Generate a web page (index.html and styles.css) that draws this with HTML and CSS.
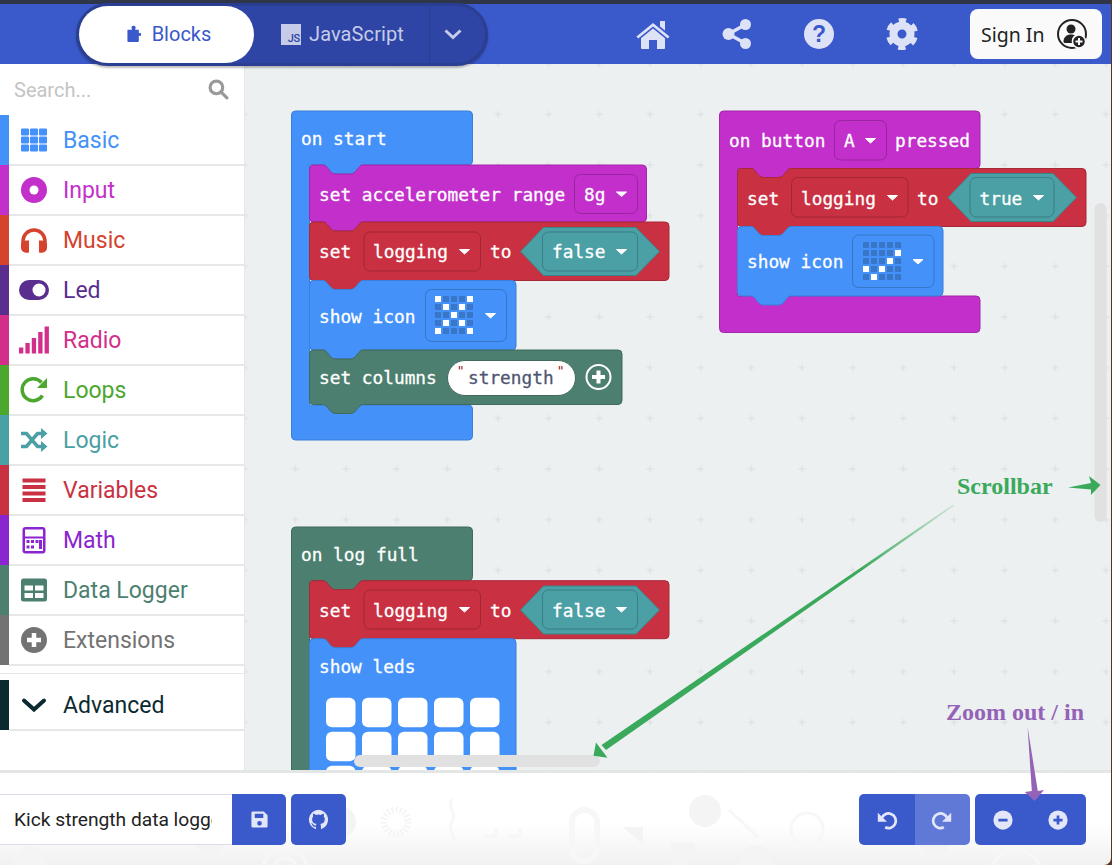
FILE: index.html
```html
<!DOCTYPE html>
<html lang="en">
<head>
<meta charset="utf-8">
<title>Kick strength data logger</title>
<link rel="stylesheet" href="styles.css">
</head>
<body>
<div class="app">
  <div class="topline"></div>
  <header class="header">
    <div class="toggle">
      <button class="tab tab-active">
        <svg class="tab-icon" viewBox="0 0 16 20"><path d="M1 5h4.200c.6 0 .7-.5.3-1C4.600 3 5 .5 7.500.5S10.400 3 9.500 4c-.4.5-.3 1 .3 1H13.500v3.600c0 .6.5.7 1 .3 1-.8 1.500.2 1.500 1.600s-.5 2.400-1.500 1.600c-.5-.4-1-.3-1 .3V18a1 1 0 0 1-1 1H1.500a1 1 0 0 1-1-1V5.500z"/></svg>
        <span>Blocks</span>
      </button>
      <button class="tab tab-js">
        <span class="js-icon">JS</span>
        <span>JavaScript</span>
      </button>
      <button class="tab-more">
        <svg class="more-icon" viewBox="0 0 20 12"><path d="M2.500 2.500 10 9.500l7.500-7"/></svg>
      </button>
    </div>
    <nav class="nav">
      <span class="nav-item"><svg viewBox="0 0 36 32"><path d="M18 5 34.500 18.500l-1.700 2L18 8.500 3.200 20.500l-1.700-2L18 5zM25 3h5v9.500l-5-4V3z"/><path d="M18 10.500 30 20.200V30a1 1 0 0 1-1 1h-7V22h-8v9H7a1 1 0 0 1-1-1v-9.800L18 10.500z"/></svg></span>
      <span class="nav-item"><svg viewBox="-3.500 0 36 32"><circle cx="7" cy="16" r="6"/><circle cx="24" cy="6.500" r="5.500"/><circle cx="24" cy="25.500" r="5.500"/><path class="nav-line" d="M7 16 24 6.500M7 16l17 9.500"/></svg></span>
      <span class="nav-item"><svg viewBox="-2 0 36 32"><circle cx="16" cy="16" r="15"/><text class="help-q" x="16" y="24" text-anchor="middle">?</text></svg></span>
      <span class="nav-item"><svg viewBox="-2 0 36 32"><circle class="gear-teeth" cx="16" cy="16" r="13"/><circle class="gear-ring" cx="16" cy="16" r="8.500"/></svg></span>
    </nav>
    <button class="signin">
      <span>Sign In</span>
      <svg class="signin-icon" viewBox="0 0 32 32"><circle class="si-ring" cx="16" cy="16" r="14"/><circle cx="15" cy="11" r="4.500"/><path d="M7.500 24c0-5 3-7.500 7.500-7.500 2 0 3 .5 4 1-2.500 1-3.500 4-3 7.500h-7a1.500 1.500 0 0 1-1.500-1z"/><circle class="si-badge" cx="23" cy="23.500" r="6.500"/><path class="si-plus" d="M23 20v7M19.500 23.500h7"/></svg>
    </button>
  </header>

  <main class="main">
    <aside class="sidebar">
      <div class="search">
        <span class="search-text">Search...</span>
        <svg class="search-icon" viewBox="0 0 20 20"><circle cx="8" cy="8" r="6"/><path d="m12.500 12.500 5.500 5.500"/></svg>
      </div>
      <ul class="cats">
        <li class="cat c-basic"><svg viewBox="0 0 32 32"><rect x="3" y="4.500" width="8" height="7" rx="1"/><rect x="12" y="4.500" width="8" height="7" rx="1"/><rect x="21" y="4.500" width="8" height="7" rx="1"/><rect x="3" y="12.500" width="8" height="7" rx="1"/><rect x="12" y="12.500" width="8" height="7" rx="1"/><rect x="21" y="12.500" width="8" height="7" rx="1"/><rect x="3" y="20.500" width="8" height="7" rx="1"/><rect x="12" y="20.500" width="8" height="7" rx="1"/><rect x="21" y="20.500" width="8" height="7" rx="1"/></svg><span>Basic</span></li>
        <li class="cat c-input"><svg viewBox="0 0 32 32"><circle cx="16" cy="16" r="13"/><circle class="ico-w" cx="16" cy="16" r="4.500"/></svg><span>Input</span></li>
        <li class="cat c-music"><svg viewBox="0 0 32 32"><path class="ico-s" d="M5 21v-4a11 11 0 0 1 22 0v4"/><path d="M3 19.500a6 6 0 0 1 6-3h2v11.500a.8.8 0 0 1-.8.8H8a5 5 0 0 1-5-5v-4.300zM29 19.500a6 6 0 0 0-6-3h-2v11.500a.8.8 0 0 0 .8.8H24a5 5 0 0 0 5-5v-4.300z"/></svg><span>Music</span></li>
        <li class="cat c-led"><svg viewBox="0 0 32 32"><rect x="1" y="6" width="30" height="20" rx="10"/><circle class="ico-w" cx="21" cy="16" r="6.500"/></svg><span>Led</span></li>
        <li class="cat c-radio"><svg viewBox="0 0 32 32"><rect x="1" y="23.500" width="4.300" height="6"/><rect x="7.400" y="19" width="4.300" height="10.500"/><rect x="13.800" y="14" width="4.300" height="15.500"/><rect x="20.200" y="8" width="4.300" height="21.500"/><rect x="26.600" y="2.500" width="4.300" height="27"/></svg><span>Radio</span></li>
        <li class="cat c-loops"><svg viewBox="0 0 32 32"><path class="ico-s" d="M24.500 21.500A11 11 0 1 1 23.500 8.500"/><path d="M29 4v10H19z"/></svg><span>Loops</span></li>
        <li class="cat c-logic"><svg viewBox="0 0 32 32"><path class="ico-s" d="M3 9.500h5.500l11 13H24M3 22.500h5.500l11-13H24"/><path d="M23 4l6.500 5.500L23 15zM23 17l6.500 5.500L23 28z"/></svg><span>Logic</span></li>
        <li class="cat c-vars"><svg viewBox="0 0 32 32"><rect x="4.500" y="4.500" width="23" height="4"/><rect x="4.500" y="11" width="23" height="4"/><rect x="4.500" y="17.500" width="23" height="4"/><rect x="4.500" y="24" width="23" height="4"/></svg><span>Variables</span></li>
        <li class="cat c-math"><svg viewBox="0 0 32 32"><rect x="4.500" y="3" width="23" height="26.500" rx="3"/><rect class="ico-w" x="7" y="5.500" width="18" height="7"/><rect class="ico-w" x="7" y="14.500" width="18" height="12.500"/><rect x="8.500" y="16" width="3" height="3"/><rect x="13" y="16" width="3" height="3"/><rect x="17.500" y="16" width="3" height="3"/><rect x="8.500" y="21.500" width="3" height="3"/><rect x="13" y="21.500" width="3" height="3"/><rect x="21" y="16" width="3" height="9"/></svg><span>Math</span></li>
        <li class="cat c-data"><svg viewBox="0 0 32 32"><rect x="3" y="4.500" width="26" height="23" rx="2.500"/><rect class="ico-w" x="6.500" y="11.500" width="8.500" height="5"/><rect class="ico-w" x="17" y="11.500" width="8.500" height="5"/><rect class="ico-w" x="6.500" y="19" width="8.500" height="5"/><rect class="ico-w" x="17" y="19" width="8.500" height="5"/></svg><span>Data Logger</span></li>
        <li class="cat c-ext"><svg viewBox="0 0 32 32"><circle cx="16" cy="16" r="13"/><path class="ico-plus" d="M16 9v14M9 16h14"/></svg><span>Extensions</span></li>
      </ul>
      <div class="cat-gap"></div>
      <div class="cat c-adv"><svg viewBox="0 0 32 32"><path class="ico-chev" d="M6 11.500 16 20.500l10-9"/></svg><span>Advanced</span></div>
    </aside>

    <div class="workspace">
      <svg class="canvas" viewBox="245 64 867 706" preserveAspectRatio="xMinYMin meet">
        <defs>
          <pattern id="grid" patternUnits="userSpaceOnUse" x="244.600" y="63.600" width="50.670" height="50.670">
            <path class="grid-cross" d="M0 0h3.500M50.670 0h-3.500M0 0v3.500M50.670 0v3.500M0 50.670v-3.500M50.670 50.670v-3.500M0 50.670h3.500M50.670 50.670h-3.500"/>
          </pattern>
          <polygon id="caret" class="caret" points="0.500,0.500 10.500,0.500 5.500,5"/>
          <g id="ledgrid">
            <rect x="0" y="0" width="6" height="6"/><rect x="8" y="0" width="6" height="6"/><rect x="16" y="0" width="6" height="6"/><rect x="24" y="0" width="6" height="6"/><rect x="32" y="0" width="6" height="6"/>
            <rect x="0" y="8" width="6" height="6"/><rect x="8" y="8" width="6" height="6"/><rect x="16" y="8" width="6" height="6"/><rect x="24" y="8" width="6" height="6"/><rect x="32" y="8" width="6" height="6"/>
            <rect x="0" y="16" width="6" height="6"/><rect x="8" y="16" width="6" height="6"/><rect x="16" y="16" width="6" height="6"/><rect x="24" y="16" width="6" height="6"/><rect x="32" y="16" width="6" height="6"/>
            <rect x="0" y="24" width="6" height="6"/><rect x="8" y="24" width="6" height="6"/><rect x="16" y="24" width="6" height="6"/><rect x="24" y="24" width="6" height="6"/><rect x="32" y="24" width="6" height="6"/>
            <rect x="0" y="32" width="6" height="6"/><rect x="8" y="32" width="6" height="6"/><rect x="16" y="32" width="6" height="6"/><rect x="24" y="32" width="6" height="6"/><rect x="32" y="32" width="6" height="6"/>
          </g>
        </defs>
        <rect class="grid-fill" x="245" y="64" width="867" height="706"/>

        <!-- on start -->
        <path class="b-blue" d="M291.500 115a4 4 0 0 1 4-4H468.500a4 4 0 0 1 4 4V161a4 4 0 0 1-4 4H362.500c-4 0-6 9-12 9h-15c-6 0-8-9-12-9H309.500V405H468.500a4 4 0 0 1 4 4V436a4 4 0 0 1-4 4H295.500a4 4 0 0 1-4-4z"/>
        <text class="bt" x="301" y="145">on start</text>

        <path class="b-mag" d="M309.500 169a4 4 0 0 1 4-4H323.500c4 0 6 9 12 9h15c6 0 8-9 12-9H642.500a4 4 0 0 1 4 4V218a4 4 0 0 1-4 4H362.500c-4 0-6 9-12 9h-15c-6 0-8-9-12-9H313.500a4 4 0 0 1-4-4z"/>
        <text class="bt" x="319" y="200.500">set accelerometer range</text>
        <rect class="f-mag" x="574.500" y="174.500" width="63" height="39" rx="6"/>
        <text class="bt" x="584" y="200.500">8g</text>
        <use href="#caret" x="616" y="191.500"/>

        <path class="b-red" d="M309.500 226a4 4 0 0 1 4-4H323.500c4 0 6 9 12 9h15c6 0 8-9 12-9H665a4 4 0 0 1 4 4V276.500a4 4 0 0 1-4 4H362.500c-4 0-6 9-12 9h-15c-6 0-8-9-12-9H313.500a4 4 0 0 1-4-4z"/>
        <text class="bt" x="319" y="258">set</text>
        <rect class="f-red" x="364" y="232" width="116.500" height="39" rx="6"/>
        <text class="bt" x="373" y="258">logging</text>
        <use href="#caret" x="459" y="249"/>
        <text class="bt" x="490" y="258">to</text>
        <polygon class="b-teal" points="520.500,251.500 543.500,227.500 636,227.500 659.500,251.500 636,275.500 543.500,275.500"/>
        <rect class="f-teal" x="542.500" y="232" width="95" height="39" rx="6"/>
        <text class="bt" x="552" y="258">false</text>
        <use href="#caret" x="616" y="249"/>

        <path class="b-blue" d="M309.500 284.500a4 4 0 0 1 4-4H323.500c4 0 6 9 12 9h15c6 0 8-9 12-9H512a4 4 0 0 1 4 4V346a4 4 0 0 1-4 4H362.500c-4 0-6 9-12 9h-15c-6 0-8-9-12-9H313.500a4 4 0 0 1-4-4z"/>
        <text class="bt" x="319" y="322.500">show icon</text>
        <rect class="f-blue" x="425.500" y="289.500" width="81" height="52" rx="6"/>
        <use class="led-off" href="#ledgrid" x="435" y="296"/>
        <g class="led-on">
          <rect x="435" y="296" width="6" height="6"/><rect x="467" y="296" width="6" height="6"/>
          <rect x="443" y="304" width="6" height="6"/><rect x="459" y="304" width="6" height="6"/>
          <rect x="451" y="312" width="6" height="6"/>
          <rect x="443" y="320" width="6" height="6"/><rect x="459" y="320" width="6" height="6"/>
          <rect x="435" y="328" width="6" height="6"/><rect x="467" y="328" width="6" height="6"/>
        </g>
        <use href="#caret" x="485" y="313"/>

        <path class="b-green" d="M309.500 354a4 4 0 0 1 4-4H323.500c4 0 6 9 12 9h15c6 0 8-9 12-9H618a4 4 0 0 1 4 4V400.500a4 4 0 0 1-4 4H362.500c-4 0-6 9-12 9h-15c-6 0-8-9-12-9H313.500a4 4 0 0 1-4-4z"/>
        <text class="bt" x="319" y="384">set columns</text>
        <rect class="str-field" x="447.500" y="360.500" width="128" height="35" rx="17.500"/>
        <text class="quote" x="456.800" y="374.500">"</text>
        <text class="quote" x="556.800" y="374.500">"</text>
        <text class="bt-str" x="468" y="384">strength</text>
        <circle class="add-ring" cx="598.500" cy="377" r="12"/>
        <path class="add-plus" d="M598.500 370.500v13M592 377h13"/>

        <!-- on button A pressed -->
        <path class="b-mag" d="M719.500 115a4 4 0 0 1 4-4H976a4 4 0 0 1 4 4V164.500a4 4 0 0 1-4 4H790.500c-4 0-6 9-12 9h-15c-6 0-8-9-12-9H737.500V296H976a4 4 0 0 1 4 4V328.500a4 4 0 0 1-4 4H723.500a4 4 0 0 1-4-4z"/>
        <text class="bt" x="729" y="147">on button</text>
        <rect class="f-mag" x="834.500" y="120.500" width="52" height="39.500" rx="6"/>
        <text class="bt" x="844" y="147">A</text>
        <use href="#caret" x="865" y="138"/>
        <text class="bt" x="895" y="147">pressed</text>

        <path class="b-red" d="M737.500 172.500a4 4 0 0 1 4-4H751.500c4 0 6 9 12 9h15c6 0 8-9 12-9H1082a4 4 0 0 1 4 4V222.500a4 4 0 0 1-4 4H790.500c-4 0-6 9-12 9h-15c-6 0-8-9-12-9H741.500a4 4 0 0 1-4-4z"/>
        <text class="bt" x="747" y="204.500">set</text>
        <rect class="f-red" x="791.500" y="177.500" width="116.500" height="39.500" rx="6"/>
        <text class="bt" x="801" y="204.500">logging</text>
        <use href="#caret" x="887" y="195"/>
        <text class="bt" x="917" y="204.500">to</text>
        <polygon class="b-teal" points="948,197.500 971,173.500 1053,173.500 1076.500,197.500 1053,221.500 971,221.500"/>
        <rect class="f-teal" x="970" y="177.500" width="84" height="39.500" rx="6"/>
        <text class="bt" x="979.500" y="204.500">true</text>
        <use href="#caret" x="1033" y="195"/>

        <path class="b-blue" d="M737.500 230.500a4 4 0 0 1 4-4H751.500c4 0 6 9 12 9h15c6 0 8-9 12-9H939a4 4 0 0 1 4 4V292a4 4 0 0 1-4 4H790.500c-4 0-6 9-12 9h-15c-6 0-8-9-12-9H741.500a4 4 0 0 1-4-4z"/>
        <text class="bt" x="747" y="268">show icon</text>
        <rect class="f-blue" x="852.500" y="235" width="81.500" height="52.500" rx="6"/>
        <use class="led-off" href="#ledgrid" x="863" y="242"/>
        <g class="led-on">
          <rect x="895" y="250" width="6" height="6"/>
          <rect x="887" y="258" width="6" height="6"/>
          <rect x="863" y="266" width="6" height="6"/><rect x="879" y="266" width="6" height="6"/>
          <rect x="871" y="274" width="6" height="6"/>
        </g>
        <use href="#caret" x="912.500" y="259"/>

        <!-- on log full -->
        <path class="b-green" d="M291.500 531a4 4 0 0 1 4-4H468.500a4 4 0 0 1 4 4V576.700a4 4 0 0 1-4 4H362.500c-4 0-6 9-12 9h-15c-6 0-8-9-12-9H309.500V780H291.500z"/>
        <text class="bt" x="301" y="560.500">on log full</text>

        <path class="b-red" d="M309.500 584.700a4 4 0 0 1 4-4H323.500c4 0 6 9 12 9h15c6 0 8-9 12-9H665a4 4 0 0 1 4 4V634.700a4 4 0 0 1-4 4H362.500c-4 0-6 9-12 9h-15c-6 0-8-9-12-9H313.500a4 4 0 0 1-4-4z"/>
        <text class="bt" x="319" y="616.500">set</text>
        <rect class="f-red" x="364" y="590" width="116.500" height="39" rx="6"/>
        <text class="bt" x="373" y="616.500">logging</text>
        <use href="#caret" x="459" y="607"/>
        <text class="bt" x="490" y="616.500">to</text>
        <polygon class="b-teal" points="520.500,610 543.500,586 636,586 659.500,610 636,634 543.500,634"/>
        <rect class="f-teal" x="542.500" y="590" width="95" height="39" rx="6"/>
        <text class="bt" x="552" y="616.500">false</text>
        <use href="#caret" x="616" y="607"/>

        <path class="b-blue" d="M309.500 642.700a4 4 0 0 1 4-4H323.500c4 0 6 9 12 9h15c6 0 8-9 12-9H512a4 4 0 0 1 4 4V780H309.500z"/>
        <text class="bt" x="319" y="672.500">show leds</text>
        <g class="led-big">
          <rect x="326" y="697.700" width="29.500" height="29.500" rx="6"/><rect x="362" y="697.700" width="29.500" height="29.500" rx="6"/><rect x="398" y="697.700" width="29.500" height="29.500" rx="6"/><rect x="434" y="697.700" width="29.500" height="29.500" rx="6"/><rect x="470" y="697.700" width="29.500" height="29.500" rx="6"/>
          <rect x="326" y="731.700" width="29.500" height="29.500" rx="6"/><rect x="362" y="731.700" width="29.500" height="29.500" rx="6"/><rect x="398" y="731.700" width="29.500" height="29.500" rx="6"/><rect x="434" y="731.700" width="29.500" height="29.500" rx="6"/><rect x="470" y="731.700" width="29.500" height="29.500" rx="6"/>
          <rect x="326" y="765.700" width="29.500" height="29.500" rx="6"/><rect x="362" y="765.700" width="29.500" height="29.500" rx="6"/><rect x="398" y="765.700" width="29.500" height="29.500" rx="6"/><rect x="434" y="765.700" width="29.500" height="29.500" rx="6"/><rect x="470" y="765.700" width="29.500" height="29.500" rx="6"/>
        </g>

        <rect class="scroll" x="354" y="755" width="246" height="12" rx="6"/>
        <rect class="scroll" x="1094.500" y="203" width="12" height="319" rx="6"/>
      </svg>
    </div>
  </main>

  <footer class="footer">
    <svg class="footer-art" viewBox="0 0 1112 92">
      <g class="art-fill">
        <circle cx="30" cy="89" r="16"/><circle cx="210" cy="67" r="15"/><circle cx="340" cy="49" r="16"/>
        <circle cx="705" cy="38" r="16"/><circle cx="756" cy="89" r="17"/><circle cx="935" cy="67" r="16"/>
        <polygon points="623,54 643,54 643,72"/>
        <path d="M671 70h24v12h-8v10h-16z"/>
      </g>
      <g class="art-line">
        <circle cx="807" cy="56" r="16"/>
        <path d="M729 37 759 65"/>
        <rect class="art-thick" x="572" y="37" width="25" height="51" rx="12.500"/>
        <path d="M452 26c-6 10 6 14 0 23s6 14 0 23"/>
        <path d="M484 63h12v-8M508 63h12v-8"/>
        <circle cx="285" cy="97" r="22"/><circle cx="285" cy="97" r="12"/>
        <circle cx="1016" cy="103" r="26"/>
      </g>
      <circle class="art-spin" cx="396" cy="49" r="12"/>
    </svg>
    <div class="file">
      <input class="file-name" value="Kick strength data logger" aria-label="Project name">
      <button class="btn btn-save"><svg viewBox="0 0 20 20"><path fill-rule="evenodd" d="M3 1.500h11.500L18.500 5.500V17a1.500 1.500 0 0 1-1.500 1.500H3A1.500 1.500 0 0 1 1.500 17V3A1.500 1.500 0 0 1 3 1.500zM5 4v4.500h9V4zm5 7.500a2.500 2.500 0 1 0 0 5 2.500 2.500 0 0 0 0-5z"/></svg></button>
      <button class="btn btn-gh"><svg viewBox="0 0 20 20"><path d="M10 .8A9.400 9.400 0 0 0 7 19c.5.1.6-.2.6-.5v-1.700c-2.600.6-3.200-1.200-3.200-1.200-.4-1.100-1-1.400-1-1.400-.9-.6 0-.6 0-.6 1 .1 1.500 1 1.500 1 .8 1.500 2.200 1 2.700.8.100-.6.300-1 .6-1.200-2.100-.2-4.300-1-4.300-4.600 0-1 .4-1.900 1-2.500-.1-.3-.4-1.200.1-2.500 0 0 .8-.3 2.600 1a9 9 0 0 1 4.700 0c1.800-1.300 2.600-1 2.600-1 .5 1.300.2 2.200.1 2.500.6.600 1 1.500 1 2.500 0 3.600-2.200 4.400-4.300 4.600.3.300.6.800.6 1.700v2.600c0 .3.200.6.700.5A9.400 9.400 0 0 0 10 .8z"/></svg></button>
    </div>
    <div class="controls">
      <div class="group">
        <button class="btn btn-seg"><svg viewBox="0 0 24 24"><path class="stroke-i" d="M6 10.500a8 8 0 1 1 4 9.500"/><path d="M2 4v10h10z"/></svg></button>
        <button class="btn btn-seg btn-dim"><svg viewBox="0 0 24 24"><path class="stroke-i" d="M18 10.500a8 8 0 1 0-4 9.500"/><path d="M22 4v10H12z"/></svg></button>
      </div>
      <div class="group">
        <button class="btn btn-seg"><svg viewBox="0 0 24 24"><circle cx="12" cy="12" r="10.500"/><path class="stroke-b" d="M7 12h10"/></svg></button>
        <button class="btn btn-seg"><svg viewBox="0 0 24 24"><circle cx="12" cy="12" r="10.500"/><path class="stroke-b" d="M7 12h10M12 7v10"/></svg></button>
      </div>
    </div>
  </footer>

  <svg class="notes" viewBox="0 0 1112 865">
    <defs>
      <linearGradient id="fade" gradientUnits="userSpaceOnUse" x1="954" y1="505" x2="860" y2="570">
        <stop offset="0" stop-color="#3aa95c" stop-opacity=".15"/>
        <stop offset="1" stop-color="#3aa95c"/>
      </linearGradient>
    </defs>
    <polygon class="note-green-fade" points="953,504.500 954.500,505.500 606,750 601.500,745"/>
    <polygon class="note-green" points="593.500,755.800 596,742.500 607.500,757.700"/>
    <polygon class="note-green" points="1068,487.500 1091,483 1089,476 1100.500,485 1091,495 1091,489.500"/>
    <text class="note note-g" x="957" y="494">Scrollbar</text>
    <polygon class="note-purple" points="1027.600,727 1037.800,791 1044,790 1034.700,801 1024.800,792 1031.800,791"/>
    <text class="note note-p" x="946" y="720">Zoom out / in</text>
  </svg>
</div>
</body>
</html>
```
FILE: styles.css
```css
* { box-sizing: border-box; }
html, body { margin: 0; padding: 0; height: 100%; }
body { background: #5a3420; overflow: hidden; }
button { border: 0; padding: 0; margin: 0; font: inherit; background: none; }

.app {
  position: relative;
  width: 1111px;
  height: 865px;
  display: flex;
  flex-direction: column;
  font-family: Roboto, "Liberation Sans", sans-serif;
  border-bottom-right-radius: 7px;
  overflow: hidden;
}
.topline { height: 4px; background: #30364a; flex: none; }

/* header */
.header {
  height: 60px;
  flex: none;
  background: #3a59ca;
  display: flex;
  align-items: center;
  padding-left: 76px;
  position: relative;
  z-index: 2;
}
.toggle {
  width: 412px;
  height: 63px;
  border: 3px solid #2b3f92;
  border-radius: 32px;
  background: #2e45a5;
  display: flex;
  align-items: stretch;
  box-shadow: 0 2px 2px rgba(0, 0, 0, .25);
  flex: none;
}
.tab {
  display: flex;
  align-items: center;
  justify-content: center;
  gap: 10px;
  font-size: 20px;
}
.tab-active {
  width: 175px;
  background: #fff;
  color: #3a59ca;
  border-radius: 29px;
  gap: 11px;
  padding-left: 5px;
}
.tab-icon { width: 14px; height: 18px; fill: #3a59ca; }
.tab-js {
  width: 175px;
  color: #c5cbe9;
  gap: 8px;
  padding-left: 2px;
  letter-spacing: .1px;
}
.js-icon {
  width: 20px;
  height: 21px;
  background: #c5cbe9;
  color: #2e45a5;
  font-size: 11px;
  font-weight: 500;
  line-height: 12px;
  text-align: right;
  padding: 9px 1px 0 0;
  letter-spacing: -.2px;
}
.tab-more {
  flex: 1;
  border-left: 1px solid #2b3f92;
  display: flex;
  align-items: center;
  justify-content: center;
  padding-right: 10px;
}
.more-icon { width: 20px; height: 12px; fill: none; stroke: #c5cbe9; stroke-width: 3; }
.nav { display: flex; margin-left: 123px; flex: none; }
.nav-item { width: 83px; display: flex; justify-content: center; align-items: center; }
.nav-item svg { height: 32px; width: 36px; fill: #dee2f7; }
.nav-line { fill: none; stroke: #dee2f7; stroke-width: 3.500; }
.help-q { fill: #3a59ca; font: 900 23px "Liberation Sans", sans-serif; }
.gear-teeth { fill: none; stroke: #dee2f7; stroke-width: 6; stroke-dasharray: 7 6.610; stroke-dashoffset: 10.300; }
.gear-ring { fill: none; stroke: #dee2f7; stroke-width: 8; }
.signin {
  width: 132px;
  height: 50px;
  margin-left: 27px;
  flex: none;
  background: #fafafa;
  border-radius: 8px;
  display: flex;
  align-items: center;
  gap: 11px;
  padding-left: 11px;
  font-family: "Noto Sans", sans-serif;
  font-size: 19.500px;
  color: #222;
}
.signin-icon { width: 32px; height: 32px; fill: #222; flex: none; }
.si-ring { fill: none; stroke: #222; stroke-width: 2; }
.si-badge { stroke: #fafafa; stroke-width: 1.500; }
.si-plus { stroke: #fff; stroke-width: 2; fill: none; }

/* main */
.main { flex: 1; min-height: 0; display: flex; }
.sidebar {
  width: 245px;
  flex: none;
  background: #fff;
  border-right: 1.500px solid #e4e6e7;
  overflow: hidden;
}
.search {
  height: 51px;
  display: flex;
  align-items: center;
  justify-content: space-between;
  padding: 0 15px 0 14px;
}
.search-text { font-size: 20px; color: #c4c4c4; }
.search-icon { width: 21px; height: 21px; fill: none; stroke: #999; stroke-width: 3; stroke-linecap: round; }
.cats { list-style: none; margin: 0; padding: 0; }
.cat {
  height: 50px;
  display: flex;
  align-items: center;
  font-size: 23px;
  border-left: 9px solid currentColor;
  position: relative;
  padding-left: 9px;
  gap: 13px;
}
.cat::after {
  content: "";
  position: absolute;
  left: 0;
  right: 0;
  bottom: -.5px;
  height: 1.500px;
  background: #e6e7e8;
}
.cat svg { width: 32px; height: 32px; fill: currentColor; flex: none; }
.ico-w { fill: #fff; }
.ico-s { fill: none; stroke: currentColor; stroke-width: 3.500; }
.ico-plus { fill: none; stroke: #fff; stroke-width: 4.500; }
.ico-chev { fill: none; stroke: currentColor; stroke-width: 4; stroke-linecap: round; }
.c-basic { color: #4492f9; }
.c-input { color: #c22fcb; }
.c-music { color: #d5432f; }
.c-led { color: #5a2e8e; }
.c-radio { color: #d22f8a; }
.c-loops { color: #4ca72f; }
.c-logic { color: #4aa0a5; }
.c-vars { color: #c93142; }
.c-math { color: #8a25cf; }
.c-data { color: #4c7f6f; }
.c-ext { color: #737373; }
.c-adv { color: #0b2a30; }
.cat-gap { height: 9px; border-bottom: 1.500px solid #e6e7e8; margin-bottom: 6px; }

/* workspace */
.workspace { flex: 1; min-width: 0; background: #ecf0f1; position: relative; }
.canvas { display: block; width: 867px; height: 706px; overflow: hidden; }
.grid-fill { fill: url(#grid); }
.grid-cross { fill: none; stroke: #d9dddf; stroke-width: 1; }
.b-blue { fill: #4492f9; stroke: #3a7fd8; }
.b-mag { fill: #c22fcb; stroke: #a327ab; }
.b-red { fill: #c93142; stroke: #a72937; }
.b-green { fill: #4c7f6f; stroke: #3f6a5c; }
.b-teal { fill: #4aa0a5; stroke: #3b8589; }
.f-blue { fill: #4492f9; stroke: #3675c8; }
.f-mag { fill: #c22fcb; stroke: #9a24a1; }
.f-red { fill: #c93142; stroke: #a12734; }
.f-teal { fill: #4aa0a5; stroke: #397f83; }
.bt, .bt-str {
  font-family: "DejaVu Sans Mono", monospace;
  font-size: 17.800px;
  fill: #fff;
  stroke: #fff;
  stroke-width: .3;
}
.bt-str { fill: #4f5672; stroke: #4f5672; }
.quote { font-family: "DejaVu Sans Mono", monospace; font-size: 13px; fill: #a31515; }
.str-field { fill: #fff; stroke: #3f6a5c; }
.add-ring { fill: none; stroke: #fff; stroke-width: 2; }
.add-plus { fill: none; stroke: #fff; stroke-width: 4; }
.caret { fill: #fff; stroke: #fff; stroke-linejoin: round; }
.led-off { fill: #3a76c8; }
.led-on { fill: #fff; }
.led-big { fill: #fff; }
.scroll { fill: #e1e1e1; }

/* footer */
.footer {
  height: 95px;
  flex: none;
  border-top: 3px solid #e4e5e5;
  background: linear-gradient(#fff 55%, #f1f1f1);
  position: relative;
  display: flex;
  justify-content: space-between;
  padding: 21px 25px 0 0;
}
.footer-art { position: absolute; left: 0; top: 0; width: 1112px; height: 92px; }
.art-fill { fill: #f4f4f4; }
.art-line { fill: none; stroke: #f7f7f7; stroke-width: 3; }
.art-thick { stroke-width: 6; }
.art-spin { fill: none; stroke: #f3f3f3; stroke-width: 7; stroke-dasharray: 1.500 2.500; }
.file, .controls { display: flex; position: relative; height: 51px; }
.controls { gap: 5px; }
.file-name {
  width: 232px;
  height: 51px;
  border: 1px solid #dcdce8;
  border-left: 0;
  border-right: 0;
  background: #fff;
  padding: 0 20px 0 14px;
  font: 19.200px Roboto, sans-serif;
  color: #222;
  outline: 0;
}
.btn {
  height: 51px;
  background: #3a59ca;
  display: flex;
  align-items: center;
  justify-content: center;
}
.btn svg { fill: #e3e6f8; }
.btn-save { width: 54px; border-radius: 0 5px 5px 0; }
.btn-save svg { width: 19px; height: 19px; }
.btn-gh { width: 55px; margin-left: 5px; border-radius: 5px; }
.btn-gh svg { width: 21px; height: 21px; }
.group { display: flex; border-radius: 5px; overflow: hidden; }
.btn-seg { width: 55.500px; }
.btn-seg svg { width: 22px; height: 22px; }
.btn-dim { background: #6079d6; }
.stroke-i { fill: none; stroke: #e3e6f8; stroke-width: 3; }
.stroke-b { fill: none; stroke: #3a59ca; stroke-width: 3; }

/* annotations */
.notes { position: absolute; left: 0; top: 0; width: 1112px; height: 865px; pointer-events: none; z-index: 3; }
.note-green { fill: #3aa95c; }
.note-green-fade { fill: url(#fade); }
.note-purple { fill: #9463b8; }
.note { font-family: "Liberation Serif", serif; font-weight: 700; font-size: 24px; }
.note-g { fill: #3aa95c; }
.note-p { fill: #9463b8; }
```
